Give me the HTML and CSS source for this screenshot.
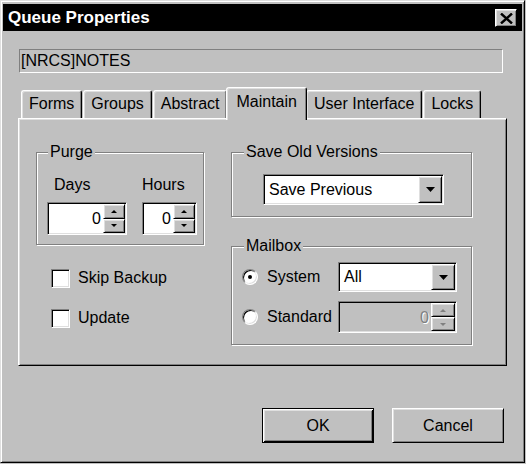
FILE: index.html
```html
<!DOCTYPE html>
<html lang="en">

<head>
    <meta charset="UTF-8">
    <title>Queue Properties</title>
    <link rel="stylesheet" href="styles.css">
</head>

<body>
    <div class="window">

        <!-- ==== title bar ==== -->
        <div class="titlebar">
            <span class="title">Queue Properties</span>
            <div class="close raised">
                <svg width="13" height="11" viewBox="0 0 13 11">
                    <path d="M1 0.5 L12 10.5 M12 0.5 L1 10.5" stroke="#000" stroke-width="2.4" fill="none" />
                </svg>
            </div>
        </div>

        <div class="content">
            <div class="path_field">[NRCS]NOTES</div>

            <!-- ==== tabs ==== -->
            <div class="tabs">
                <div class="tab">Forms</div>
                <div class="tab">Groups</div>
                <div class="tab">Abstract</div>
                <div class="tab active">Maintain</div>
                <div class="tab">User Interface</div>
                <div class="tab">Locks</div>
            </div>

            <div class="panel">
                <div class="col_left">
                    <fieldset class="group purge">
                        <legend>Purge</legend>
                        <div class="purge_fields">
                            <div class="field">
                                <span class="field_label days">Days</span>
                                <div class="spin sunken days_spin">
                                    <span class="spin_value">0</span>
                                    <div class="spin_btns">
                                        <div class="spin_btn raised"><span class="arrow_up"></span></div>
                                        <div class="spin_btn raised"><span class="arrow_down"></span></div>
                                    </div>
                                </div>
                            </div>
                            <div class="field">
                                <span class="field_label">Hours</span>
                                <div class="spin sunken hours_spin">
                                    <span class="spin_value">0</span>
                                    <div class="spin_btns">
                                        <div class="spin_btn raised"><span class="arrow_up"></span></div>
                                        <div class="spin_btn raised"><span class="arrow_down"></span></div>
                                    </div>
                                </div>
                            </div>
                        </div>
                    </fieldset>

                    <div class="checks">
                        <div class="check"><span class="box sunken"></span>Skip Backup</div>
                        <div class="check"><span class="box sunken"></span>Update</div>
                    </div>
                </div>

                <div class="col_right">
                    <fieldset class="group versions">
                        <legend>Save Old Versions</legend>
                        <div class="combo sunken versions_combo">
                            <span class="combo_value">Save Previous</span>
                            <div class="combo_btn raised">
                                <svg width="9" height="5" viewBox="0 0 9 5"><polygon points="0,0 9,0 4.5,5" fill="#000" /></svg>
                            </div>
                        </div>
                    </fieldset>

                    <fieldset class="group mailbox">
                        <legend>Mailbox</legend>
                        <div class="mail_grid">
                            <div class="radio_row"><span class="radio checked"></span>System</div>
                            <div class="combo sunken mail_combo">
                                <span class="combo_value">All</span>
                                <div class="combo_btn raised">
                                    <svg width="9" height="5" viewBox="0 0 9 5"><polygon points="0,0 9,0 4.5,5" fill="#000" /></svg>
                                </div>
                            </div>
                            <div class="radio_row"><span class="radio"></span>Standard</div>
                            <div class="spin sunken disabled mail_spin">
                                <span class="spin_value">0</span>
                                <div class="spin_btns">
                                    <div class="spin_btn raised"><span class="arrow_up"></span></div>
                                    <div class="spin_btn raised"><span class="arrow_down"></span></div>
                                </div>
                            </div>
                        </div>
                    </fieldset>
                </div>
            </div>

            <!-- ==== buttons ==== -->
            <div class="buttons">
                <div class="btn default">OK</div>
                <div class="btn raised">Cancel</div>
            </div>
        </div>
    </div>
</body>

</html>
```

FILE: styles.css
```css
* {
    box-sizing: border-box;
}

body {
    margin: 0;
    background-color: #c0c0c0;
    font-family: "Liberation Sans", Arial, sans-serif;
    font-size: 16px;
    color: #000;
}

.window {
    width: 525px;
    height: 463px;
    border: 1px solid;
    border-color: #dfdfdf #000 #000 #dfdfdf;
    box-shadow: inset 1px 1px #fff, inset -1px -1px #808080;
    padding: 3px 2px 2px 2px;
}

.raised {
    border: 1px solid;
    border-color: #fff #000 #000 #fff;
    box-shadow: inset 1px 1px #dfdfdf, inset -1px -1px #808080;
    background-color: #c0c0c0;
}

.sunken {
    border: 1px solid;
    border-color: #808080 #fff #fff #808080;
    box-shadow: inset 1px 1px #000, inset -1px -1px #dfdfdf;
    background-color: #fff;
}

/* ==== title bar ==== */

.titlebar {
    height: 27px;
    background-color: #000;
    color: #fff;
    display: flex;
    align-items: center;
    justify-content: space-between;
    padding: 0 5px 0 5px;
}

.title {
    font-weight: bold;
    font-size: 17px;
}

.close {
    width: 22px;
    height: 18px;
    display: flex;
    align-items: center;
    justify-content: center;
    margin-top: 1px;
}

.close svg {
    display: block;
}

.content {
    padding: 18px 15px 0 15px;
}

.path_field {
    height: 24px;
    border: 1px solid;
    border-color: #808080 #fff #fff #808080;
    line-height: 22px;
    padding-left: 1px;
    margin: 0 4px 0 1px;
}

/* ==== tabs ==== */

.tabs {
    display: flex;
    align-items: flex-end;
    height: 31px;
    margin-top: 14px;
    padding-left: 3px;
}

.tab {
    height: 28px;
    line-height: 26px;
    padding: 0 7px;
    margin-right: 1px;
    border: 1px solid;
    border-bottom: none;
    border-color: #fff #000 transparent #fff;
    border-radius: 3px 3px 0 0;
    box-shadow: inset 1px 1px #dfdfdf, inset -1px 0 #808080;
}

.tab.active {
    position: relative;
    z-index: 1;
    height: 33px;
    line-height: 28px;
    padding: 0 9px;
    margin: 0 -1px -2px -2px;
    background-color: #c0c0c0;
}

.panel {
    height: 248px;
    display: flex;
    gap: 27px;
    padding: 24px 0 0 17px;
    border: 1px solid;
    border-color: #fff #000 #000 #fff;
    box-shadow: inset 1px 1px #dfdfdf, inset -1px -1px #808080;
}

/* ==== group boxes ==== */

.group {
    margin: 0;
    border: 1px solid #808080;
    box-shadow: inset 1px 1px #fff, 1px 1px #fff;
    min-inline-size: 0;
}

/* legend offset counts from the fieldset padding */
.group legend {
    padding: 0 2px;
    line-height: 18px;
    background-color: #c0c0c0;
}

.col_left {
    width: 168px;
}

.purge {
    width: 168px;
    padding: 15px 6px 9px 10px;
}

.purge legend {
    margin-left: 1px;
}

.purge_fields {
    display: flex;
    gap: 15px;
}

.field {
    display: flex;
    flex-direction: column;
}

.field_label {
    line-height: 18px;
    margin-bottom: 8px;
}

.field_label.days {
    padding-left: 7px;
}

.spin {
    display: flex;
    height: 33px;
    padding: 1px;
}

.days_spin {
    width: 80px;
}

.hours_spin {
    width: 55px;
}

.spin_value {
    flex: 1;
    text-align: right;
    padding-right: 2px;
    line-height: 29px;
}

.spin_btns {
    width: 22px;
    display: flex;
    flex-direction: column;
}

.spin_btn {
    flex: 1;
    display: flex;
    align-items: center;
    justify-content: center;
}

.arrow_up {
    width: 0;
    border-left: 3px solid transparent;
    border-right: 3px solid transparent;
    border-bottom: 3px solid #000;
}

.arrow_down {
    width: 0;
    border-left: 3px solid transparent;
    border-right: 3px solid transparent;
    border-top: 3px solid #000;
}

.spin.disabled {
    background-color: #c0c0c0;
}

.spin.disabled .spin_value {
    color: #808080;
    text-shadow: 1px 1px #fff;
}

.spin.disabled .arrow_up {
    border-bottom-color: #808080;
}

.spin.disabled .arrow_down {
    border-top-color: #808080;
}

/* ==== check boxes ==== */

.checks {
    margin-top: 23px;
    padding-left: 15px;
    display: flex;
    flex-direction: column;
    gap: 20px;
}

.check {
    height: 20px;
    display: flex;
    align-items: center;
    gap: 8px;
}

.box {
    width: 19px;
    height: 19px;
}

/* ==== right column ==== */

.col_right {
    width: 241px;
}

.versions {
    width: 241px;
    padding: 13px 0 11px 31px;
}

.versions legend {
    margin-left: -19px;
}

.combo {
    display: flex;
    padding: 1px;
}

.versions_combo {
    width: 181px;
    height: 31px;
}

.combo_value {
    flex: 1;
    padding-left: 4px;
    line-height: 27px;
}

.combo_btn {
    width: 24px;
    display: flex;
    align-items: center;
    justify-content: center;
}

.combo_btn svg {
    display: block;
}

.mailbox {
    width: 241px;
    margin-top: 20px;
    padding: 7px 0 11px 10px;
}

.mailbox legend {
    margin-left: 2px;
}

.mail_grid {
    display: grid;
    grid-template-columns: 96px 119px;
    row-gap: 9px;
}

.radio_row {
    display: flex;
    align-items: center;
    gap: 9px;
}

.radio {
    width: 16px;
    height: 16px;
    border-radius: 50%;
    border: 1px solid;
    border-color: #808080 #fff #fff #808080;
    box-shadow: inset 1px 1px #000, inset -1px -1px #dfdfdf;
    background-color: #fff;
    display: flex;
    align-items: center;
    justify-content: center;
}

.radio.checked::after {
    content: "";
    width: 4px;
    height: 4px;
    border-radius: 50%;
    background-color: #000;
}

.mail_combo {
    height: 30px;
}

.mail_combo .combo_value {
    line-height: 26px;
}

.mail_spin {
    height: 32px;
}

.mail_spin .spin_btns {
    width: 24px;
}

/* ==== buttons ==== */

.buttons {
    margin-top: 42px;
    padding-right: 3px;
    display: flex;
    justify-content: flex-end;
    gap: 18px;
}

.btn {
    width: 112px;
    height: 35px;
    display: flex;
    align-items: center;
    justify-content: center;
}

.btn.default {
    border: 1px solid #000;
    box-shadow: inset 1px 1px #fff, inset -1px -1px #000, inset 2px 2px #dfdfdf, inset -2px -2px #808080;
}
```
